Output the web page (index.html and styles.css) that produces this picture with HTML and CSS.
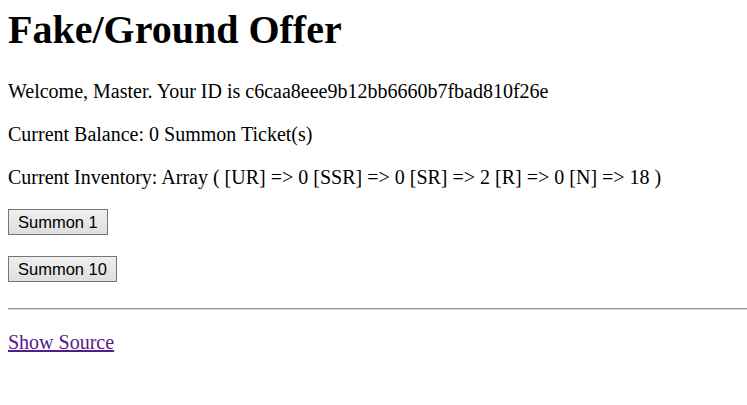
FILE: index.html
```html
<!DOCTYPE html>
<html>
<head>
<meta charset="utf-8">
<link rel="stylesheet" href="styles.css">
</head>
<body class="page">
<h1 class="title">Fake/Ground Offer</h1>
<p class="line">Welcome, Master. Your ID is c6caa8eee9b12bb6660b7fbad810f26e</p>
<p class="line">Current Balance: 0 Summon Ticket(s)</p>
<p class="line">Current Inventory: Array ( [UR] =&gt; 0 [SSR] =&gt; 0 [SR] =&gt; 2 [R] =&gt; 0 [N] =&gt; 18 )</p>
<div class="forms">
<form class="form"><button type="button" class="btn">Summon 1</button></form>
<form class="form"><button type="button" class="btn">Summon 10</button></form>
</div>
<hr class="rule">
<p class="source"><a class="link" href="#">Show Source</a></p>
</body>
</html>
```
FILE: styles.css
```css
html, body {
  margin: 0;
  padding: 0;
}
.page {
  padding: 1px 0 0 8px;
  font-family: "Liberation Serif", "Times New Roman", serif;
  font-size: 20px;
  line-height: 23px;
  color: #000;
  background: #fff;
}
.title {
  font-size: 40px;
  line-height: 46px;
  font-weight: bold;
  margin: 6px 0 27px 0;
}
.line {
  margin: 20px 0;
}
.forms {
  display: flex;
  flex-direction: column;
  align-items: flex-start;
  gap: 21px;
  margin-top: 18px;
}
.form {
  margin: 0;
}
.btn {
  display: block;
  font-family: "Liberation Sans", Arial, sans-serif;
  font-size: 16.5px;
  line-height: 18px;
  height: 26px;
  padding: 0 9px;
  border: 1px solid #767676;
  border-radius: 0;
  background: linear-gradient(#efefef, #dedede);
  color: #000;
}
.rule {
  margin: 26px 0 0 0;
  height: 0;
  border: none;
  border-top: 1px solid #9a9a9a;
  border-bottom: 1px solid #d6d6d6;
}
.source {
  margin: 21px 0;
}
.link {
  color: #551a8b;
  text-decoration: underline;
}
```
